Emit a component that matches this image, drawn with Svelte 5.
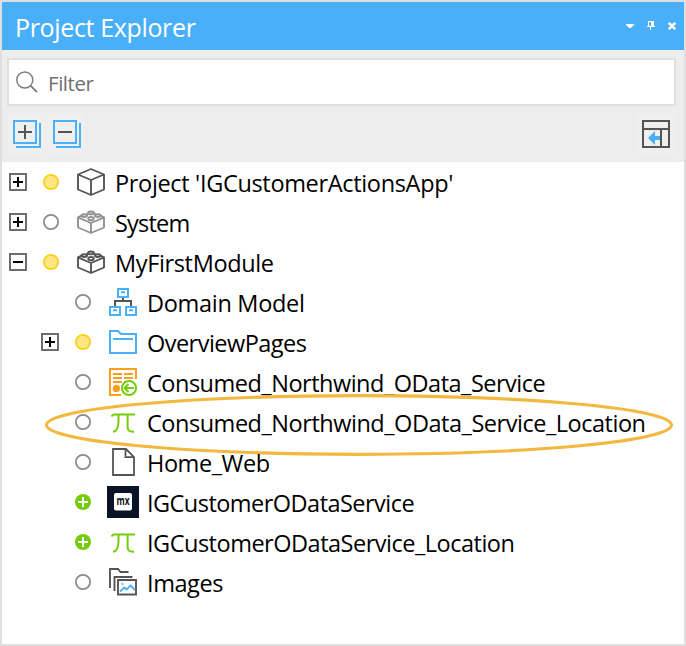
<script>
  const rows = [
    { label: "Project 'IGCustomerActionsApp'", icon: 'cube', dot: 'yellow', exp: '+', ls: -0.33 },
    { label: 'System', icon: 'brickLight', dot: 'empty', exp: '+', ls: -0.8 },
    { label: 'MyFirstModule', icon: 'brick', dot: 'yellow', exp: '-', ls: -0.36 },
    { label: 'Domain Model', icon: 'domain', dot: 'empty', child: true, ls: -0.3 },
    { label: 'OverviewPages', icon: 'folder', dot: 'yellow', exp: '+', child: true, ls: -0.53 },
    { label: 'Consumed_Northwind_OData_Service', icon: 'odata', dot: 'empty', child: true, ls: -0.49 },
    { label: 'Consumed_Northwind_OData_Service_Location', icon: 'pi', dot: 'empty', child: true, marked: true, ls: -0.47 },
    { label: 'Home_Web', icon: 'page', dot: 'empty', child: true, ls: -0.42 },
    { label: 'IGCustomerODataService', icon: 'mx', dot: 'added', child: true, ls: -0.53 },
    { label: 'IGCustomerODataService_Location', icon: 'pi', dot: 'added', child: true, ls: -0.49 },
    { label: 'Images', icon: 'images', dot: 'empty', child: true, ls: -0.42 }
  ];
</script>

{#snippet brick(color)}
  <g fill="none" stroke={color} stroke-width="1.9" stroke-linejoin="round">
    <path d="M6.5 9.6 3 11.4V21.5L16 27 29 21.5V11.4L25.5 9.6M3 11.4 16 17 29 11.4M16 17V27M11.5 8.1 13 7.5M19 7.5 20.5 8.1" />
    <ellipse cx="16" cy="6.9" rx="2.8" ry="1.4" />
    <ellipse cx="9.3" cy="9.6" rx="2.8" ry="1.4" />
    <ellipse cx="22.7" cy="9.6" rx="2.8" ry="1.4" />
    <ellipse cx="16" cy="12.6" rx="2.8" ry="1.6" />
  </g>
{/snippet}

<div class="panel">
  <header>
    <h1>Project Explorer</h1>
    <div class="winbtns">
      <svg width="8" height="10" viewBox="0 0 8 10"><path d="M0 3H8V4L4.7 7H3.3L0 4Z" fill="#fff" /></svg>
      <svg width="8" height="10" viewBox="0 0 8 10" shape-rendering="crispEdges"><path d="M1 0H7V5H8V6H4V9H3V6H0V5H1ZM2 1V5H4V1Z" fill="#fff" fill-rule="evenodd" /></svg>
      <svg width="8" height="10" viewBox="0 0 8 10"><path d="M.8 1.8 7.2 8.2M7.2 1.8.8 8.2" stroke="#fff" stroke-width="2.3" /></svg>
    </div>
  </header>

  <div class="tools">
    <div class="filter">
      <svg width="24" height="24" viewBox="0 0 24 24" fill="none" stroke="#7b7b7b" stroke-width="1.4"><circle cx="9.8" cy="10" r="8" /><path d="M15.5 15.7 22 22.2" stroke-width="1.7" /></svg>
      <span>Filter</span>
    </div>
    <div class="toolbar">
      <div class="btn"><svg width="28" height="28" fill="none" stroke="#4ab0f9" stroke-width="2"><path d="M1 1H23V23H1ZM27 3V27H3" /><path d="M5 12H19M12 5V19" stroke="#555" /></svg></div>
      <div class="btn"><svg width="28" height="28" fill="none" stroke="#4ab0f9" stroke-width="2"><path d="M1 1H23V23H1ZM27 3V27H3" /><path d="M5 12H19" stroke="#555" /></svg></div>
      <div class="btn last"><svg width="28" height="28" fill="none" stroke="#555" stroke-width="2"><path d="M1 1H27V27H1ZM1 9H27M19 9V27" /><path d="M6 18 13 11V16H18V20H13V25Z" fill="#4ab0f9" stroke="none" /></svg></div>
    </div>
  </div>

  <div class="tree">
    {#each rows as r}
      <div class="row" class:child={r.child}>
        <div class="exp">
          {#if r.exp}
            <svg width="18" height="18"><rect x="1" y="1" width="16" height="16" fill="#fff" stroke="#6e6e6e" stroke-width="2" /><path d={r.exp === '+' ? 'M4 9H14M9 4V14' : 'M4 9H14'} stroke="#000" stroke-width="2" /></svg>
          {/if}
        </div>
        <svg class="dot" width="18" height="18">
          {#if r.dot === 'added'}
            <circle cx="9" cy="9" r="8" fill="#76cc0b" /><path d="M4 9H14M9 4V14" stroke="#fff" stroke-width="2" />
          {:else}
            <circle cx="9" cy="9" r="7.1" fill={r.dot === 'yellow' ? '#ffe583' : '#fff'} stroke={r.dot === 'yellow' ? '#fccf17' : '#8b8b8b'} stroke-width="1.8" />
          {/if}
        </svg>
        <svg class="icon" width="32" height="32" viewBox="0 0 32 32">
          {#if r.icon === 'cube'}
            <path d="M16 3 29 8.5V23.5L16 29 3 23.5V8.5ZM3 8.5 16 14 29 8.5M16 14V29" fill="none" stroke="#555" stroke-width="1.9" stroke-linejoin="round" />
          {:else if r.icon === 'brickLight'}
            {@render brick('#939393')}
          {:else if r.icon === 'brick'}
            {@render brick('#555')}
          {:else if r.icon === 'domain'}
            <path d="M16 12V16M8 20V15H24V20" fill="none" stroke="#555" stroke-width="2" />
            <path d="M11 3H21V11H11ZM3 21H13V29H3ZM19 21H29V29H19ZM14 6.2H18M6 24.2H10M22 24.2H26" fill="none" stroke="#4ab0f9" stroke-width="2" />
          {:else if r.icon === 'folder'}
            <path d="M3 5H11L14 8H29V27H3ZM6 13H26" fill="none" stroke="#4ab0f9" stroke-width="2" />
          {:else if r.icon === 'odata'}
            <path d="M29 13V3H3V29H14M6 8H15M17 8H26M6 12H15M17 12H26M6 16H15M17 16H19" fill="none" stroke="#fa9e22" stroke-width="2" />
            <circle cx="9.4" cy="22.4" r="3.6" fill="#fa9e22" />
            <circle cx="22" cy="22" r="7.1" fill="#fff" stroke="#76cc0b" stroke-width="2" />
            <path d="M27 22H18M21.5 18 17.5 22 21.5 26" fill="none" stroke="#76cc0b" stroke-width="2" />
          {:else if r.icon === 'pi'}
            <path d="M4.7 10.5C5.2 9 6 8.4 7.5 8.4H28M11.5 9V15C11.5 21 10.5 25.3 6 25.8M20.6 9V21C20.6 24.5 22.5 26 27 25.7" fill="none" stroke="#76cc0b" stroke-width="2" />
          {:else if r.icon === 'page'}
            <path d="M6 3H19L27 11V29H6ZM18.5 3V11.2H27" fill="none" stroke="#555" stroke-width="1.8" />
          {:else if r.icon === 'mx'}
            <rect width="32" height="32" fill="#0a1325" /><rect x="7" y="7" width="18" height="17.5" rx="2" fill="#fff" />
            <text x="16" y="19" text-anchor="middle" textLength="13" lengthAdjust="spacingAndGlyphs" class="mx">mx</text>
          {:else}
            <path d="M3 22V3H11L13.5 6H21.5M7.5 25V11H25.5M11 14H29V28.5H11Z" fill="none" stroke="#555" stroke-width="1.9" />
            <path d="M13 25.5 17.3 21.5 19.5 23.5 23.5 19.5 28 24" fill="none" stroke="#4ab0f9" stroke-width="1.8" />
            <circle cx="15.5" cy="18" r="1.1" fill="#4ab0f9" />
          {/if}
        </svg>
        <span class="label" style="letter-spacing: {r.ls}px">{r.label}</span>
        {#if r.marked}
          <svg class="ring" width="630" height="64"><ellipse cx="315" cy="32" rx="312.5" ry="29.3" fill="none" stroke="#f2b83f" stroke-width="3.2" /></svg>
        {/if}
      </div>
    {/each}
  </div>
</div>

<style>
  .panel { box-sizing: border-box; width: 686px; height: 646px; border: 2px solid #dfdfdf; background: #fff; font-family: 'Open Sans', 'Noto Sans', sans-serif; display: flex; flex-direction: column; color: #000; }
  svg { display: block; flex: none; }
  header { height: 48px; flex: none; background: #49aff9; display: flex; align-items: center; justify-content: space-between; padding: 0 8px 0 13px; }
  h1 { margin: 0; font-size: 25px; font-weight: 400; line-height: 48px; color: #fff; letter-spacing: -0.35px; white-space: nowrap; padding-top: 1px; }
  .winbtns { display: flex; gap: 13px; }
  .tools { height: 112px; flex: none; box-sizing: border-box; background: #ededed; padding: 8px 8px 0 5px; }
  .filter { box-sizing: border-box; height: 48px; border: 2px solid #e0e0e0; background: #fff; display: flex; align-items: center; gap: 9px; padding-left: 6px; color: #707070; font-size: 20.5px; letter-spacing: -0.45px; }
  .filter span { padding-top: 2px; }
  .toolbar { display: flex; gap: 2px; padding-top: 8px; }
  .btn { box-sizing: border-box; width: 38px; height: 40px; background: #efefef; display: flex; align-items: center; padding-left: 6px; }
  .last { margin-left: auto; width: 40px; }
  .tree { flex: 1; }
  .row { position: relative; height: 40px; display: flex; align-items: center; padding-left: 7px; }
  .child { padding-left: 39px; }
  .exp { width: 18px; height: 18px; flex: none; }
  .dot { margin-left: 15px; }
  .icon { margin-left: 15px; }
  .label { margin-left: 8px; font-size: 23.5px; line-height: 37px; white-space: nowrap; padding-top: 3px; }
  .ring { position: absolute; left: 42px; top: -9px; }
  .mx { font: 700 12px 'Open Sans', sans-serif; fill: #0a1325; }
</style>
